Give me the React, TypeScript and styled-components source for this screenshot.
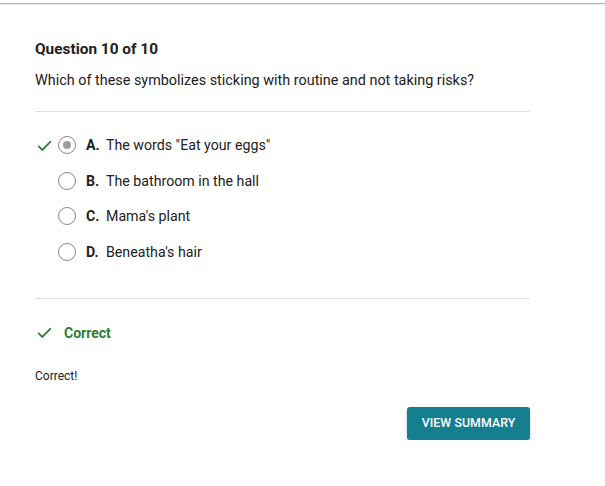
import React from 'react'
import styled, { createGlobalStyle } from 'styled-components'

const GlobalStyle = createGlobalStyle`
  html, body {
    margin: 0;
    padding: 0;
    background: #fff;
    font-family: Roboto, "Liberation Sans", Arial, sans-serif;
    color: #212121;
  }
`

const TopRule = styled.div`
  height: 3px;
  border-bottom: 1px solid #b5b5b5;
  box-shadow: 0 1px 1px rgba(0, 0, 0, 0.08);
`

const Page = styled.div`
  width: 495px;
  padding: 34px 0 0 35px;
`

const Title = styled.h2`
  margin: 0;
  font-size: 15.4px;
  font-weight: 700;
  line-height: 22px;
  color: #212121;
`

const Prompt = styled.p`
  margin: 11px 0 0;
  font-size: 14.4px;
  line-height: 20px;
  color: #212121;
`

const Divider = styled.hr<{ $top: number }>`
  margin: ${(p) => p.$top}px 0 0;
  border: 0;
  border-top: 1px solid #e0e0e0;
`

const Options = styled.ul`
  list-style: none;
  margin: 23px 0 0;
  padding: 0;
  display: flex;
  flex-direction: column;
  gap: 15.5px;
`

const Option = styled.li`
  display: flex;
  align-items: center;
  height: 20px;
  font-size: 14.2px;
`

const Mark = styled.span`
  width: 22px;
  display: flex;
  align-items: center;
  justify-content: flex-start;
`

const Radio = styled.span<{ $selected?: boolean }>`
  width: 16px;
  height: 16px;
  margin-left: 1px;
  border: 1px solid #8a8a8a;
  border-radius: 50%;
  display: flex;
  align-items: center;
  justify-content: center;
  &::after {
    content: '';
    display: ${(p) => (p.$selected ? 'block' : 'none')};
    width: 8px;
    height: 8px;
    border-radius: 50%;
    background: #9e9e9e;
  }
`

const Letter = styled.span`
  font-weight: 700;
  margin-left: 10px;
  width: 20px;
`

const Text = styled.span`
  color: #212121;
`

const Result = styled.div`
  margin-top: 24px;
  display: flex;
  align-items: center;
  height: 20px;
  font-size: 14px;
  font-weight: 700;
  color: #2e7d32;
  gap: 10px;
`

const Feedback = styled.p`
  margin: 25px 0 0;
  font-size: 12px;
  line-height: 16px;
  color: #212121;
`

const Actions = styled.div`
  margin-top: 23px;
  display: flex;
  justify-content: flex-end;
`

const Button = styled.button`
  width: 123px;
  height: 33px;
  border: 0;
  border-radius: 3px;
  background: #137f8f;
  color: #fff;
  font-family: Roboto, "Liberation Sans", Arial, sans-serif;
  font-size: 12.3px;
  font-weight: 500;
  letter-spacing: 0.1px;
  box-shadow: 0 2px 3px rgba(0, 0, 0, 0.25);
  cursor: pointer;
`

const Check = () => (
  <svg width="19" height="19" viewBox="0 0 24 24">
    <path d="M4 12.5 L9.2 17.6 L20 6.8" fill="none" stroke="#2e7d32" strokeWidth="2.2" />
  </svg>
)

const answers = [
  { letter: 'A.', text: 'The words "Eat your eggs"', selected: true },
  { letter: 'B.', text: 'The bathroom in the hall' },
  { letter: 'C.', text: "Mama's plant" },
  { letter: 'D.', text: "Beneatha's hair" },
]

const App = () => (
  <>
    <GlobalStyle />
    <TopRule />
    <Page>
      <Title>Question 10 of 10</Title>
      <Prompt>Which of these symbolizes sticking with routine and not taking risks?</Prompt>
      <Divider $top={20} />
      <Options>
        {answers.map((a) => (
          <Option key={a.letter}>
            <Mark>{a.selected && <Check />}</Mark>
            <Radio $selected={a.selected} />
            <Letter>{a.letter}</Letter>
            <Text>{a.text}</Text>
          </Option>
        ))}
      </Options>
      <Divider $top={36} />
      <Result>
        <Check />
        Correct
      </Result>
      <Feedback>Correct!</Feedback>
      <Actions>
        <Button>VIEW SUMMARY</Button>
      </Actions>
    </Page>
  </>
)

export default App
